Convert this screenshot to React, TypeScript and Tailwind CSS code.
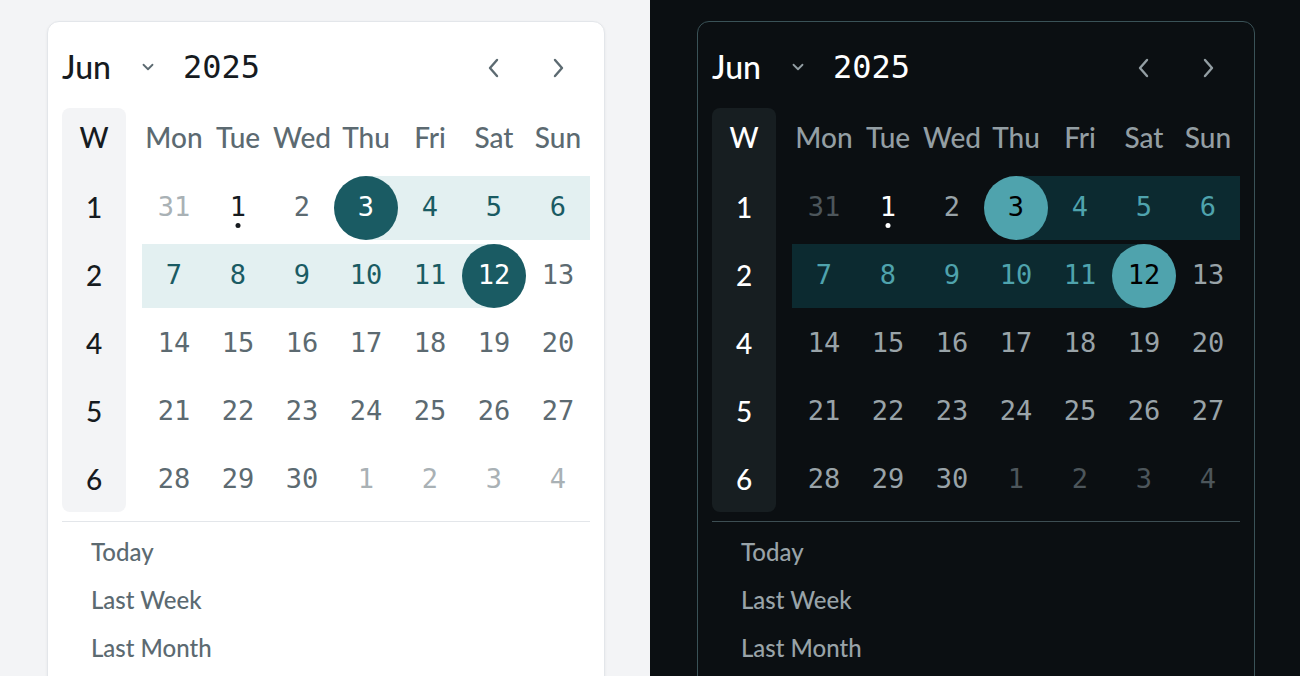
import React from 'react';

type Theme = 'light' | 'dark';

interface Day {
  n: number;
  outside?: boolean;
  today?: boolean;
}

const WEEKDAYS = ['Mon', 'Tue', 'Wed', 'Thu', 'Fri', 'Sat', 'Sun'];
const WEEK_NUMBERS = [1, 2, 4, 5, 6];

const ROWS: Day[][] = [
  [{ n: 31, outside: true }, { n: 1, today: true }, { n: 2 }, { n: 3 }, { n: 4 }, { n: 5 }, { n: 6 }],
  [{ n: 7 }, { n: 8 }, { n: 9 }, { n: 10 }, { n: 11 }, { n: 12 }, { n: 13 }],
  [{ n: 14 }, { n: 15 }, { n: 16 }, { n: 17 }, { n: 18 }, { n: 19 }, { n: 20 }],
  [{ n: 21 }, { n: 22 }, { n: 23 }, { n: 24 }, { n: 25 }, { n: 26 }, { n: 27 }],
  [{ n: 28 }, { n: 29 }, { n: 30 }, { n: 1, outside: true }, { n: 2, outside: true }, { n: 3, outside: true }, { n: 4, outside: true }],
];

const RANGE_START = 3;
const RANGE_END = 12;

const PRESETS = ['Today', 'Last Week', 'Last Month'];

const sans = "font-['Lato','Noto_Sans',sans-serif]";
const mono = "font-['DejaVu_Sans_Mono','Liberation_Mono',monospace]";

const styles = {
  light: {
    page: 'bg-[#f3f4f6]',
    card: 'bg-white border-[#e3e6ea] shadow-[0_1px_3px_rgba(0,0,0,0.06)]',
    title: 'text-[#161b1f]',
    chevron: 'text-[#5c6a71]',
    weekCol: 'bg-[#f3f4f6]',
    weekText: 'text-[#161b1f]',
    label: 'text-[#5c6a71]',
    day: 'text-[#5c6a71]',
    outside: 'text-[#a9b1b5]',
    today: 'text-[#161b1f]',
    todayDot: 'bg-[#161b1f]',
    rangeText: 'text-[#1a5b63]',
    band: 'bg-[#e3f0f1]',
    bandStart: 'bg-[linear-gradient(to_right,transparent_50%,#e3f0f1_50%)]',
    bandEnd: 'bg-[linear-gradient(to_right,#e3f0f1_50%,transparent_50%)]',
    circle: 'bg-[#1a5b63] text-white',
    divider: 'border-[#e3e6ea]',
    preset: 'text-[#5c6a71]',
  },
  dark: {
    page: 'bg-[#0b0f12]',
    card: 'bg-[#0b0f12] border-[#3a5257]',
    title: 'text-white',
    chevron: 'text-[#939ea3]',
    weekCol: 'bg-[#171e21]',
    weekText: 'text-white',
    label: 'text-[#939ea3]',
    day: 'text-[#99a3a8]',
    outside: 'text-[#4d565b]',
    today: 'text-white',
    todayDot: 'bg-white',
    rangeText: 'text-[#4fa3ad]',
    band: 'bg-[#0c2a30]',
    bandStart: 'bg-[linear-gradient(to_right,transparent_50%,#0c2a30_50%)]',
    bandEnd: 'bg-[linear-gradient(to_right,#0c2a30_50%,transparent_50%)]',
    circle: 'bg-[#4fa3ad] text-black',
    divider: 'border-[#3d4e53]',
    preset: 'text-[#99a3a8]',
  },
};

const Arrow: React.FC<{ dir: 'left' | 'right' | 'down'; className?: string; size?: number }> = ({ dir, className, size = 24 }) => {
  const d =
    dir === 'left' ? 'M15 4 L8 12 L15 20' : dir === 'right' ? 'M9 4 L16 12 L9 20' : 'M6 9 L12 15 L18 9';
  return (
    <svg width={size} height={size} viewBox="0 0 24 24" fill="none" className={className}>
      <path d={d} stroke="currentColor" strokeWidth={2.4} strokeLinecap="round" strokeLinejoin="round" />
    </svg>
  );
};

const DayCell: React.FC<{ day: Day; theme: Theme }> = ({ day, theme }) => {
  const s = styles[theme];
  const inMonth = !day.outside;
  const isStart = inMonth && day.n === RANGE_START;
  const isEnd = inMonth && day.n === RANGE_END;
  const inRange = inMonth && day.n > RANGE_START && day.n < RANGE_END;

  let bg = '';
  if (isStart) bg = s.bandStart;
  else if (isEnd) bg = s.bandEnd;
  else if (inRange) bg = s.band;

  let color = s.day;
  if (day.outside) color = s.outside;
  else if (inRange) color = s.rangeText;
  else if (day.today) color = s.today;

  return (
    <div className={`relative h-16 flex items-center justify-center ${bg}`}>
      {isStart || isEnd ? (
        <div className={`w-16 h-16 rounded-full flex items-center justify-center pb-[3px] ${s.circle}`}>
          <span className={`${mono} text-[27px] leading-none`}>{day.n}</span>
        </div>
      ) : (
        <span className={`${mono} text-[27px] leading-none pb-[3px] ${color}`}>{day.n}</span>
      )}
      {day.today && (
        <span className={`absolute bottom-[12px] left-1/2 -translate-x-1/2 w-[5px] h-[5px] rounded-full ${s.todayDot}`} />
      )}
    </div>
  );
};

const Calendar: React.FC<{ theme: Theme }> = ({ theme }) => {
  const s = styles[theme];
  return (
    <div className={`w-[650px] h-[676px] overflow-hidden ${s.page}`}>
      <div className={`ml-[47px] mt-[21px] w-[558px] h-[700px] rounded-[12px] border px-[14px] pt-[22px] ${s.card}`}>
        {/* header */}
        <div className="h-12 flex items-center justify-between">
          <div className="flex items-center pb-[2px]">
            <span className={`${sans} text-[32px] font-medium leading-none ${s.title}`}>Jun</span>
            <Arrow dir="down" size={18} className={`ml-[28px] ${s.chevron}`} />
            <span className={`${mono} text-[32px] leading-none ml-[26px] ${s.title}`}>2025</span>
          </div>
          <div className="flex">
            <button className={`w-16 h-12 flex items-center justify-center ${s.chevron}`}>
              <Arrow dir="left" />
            </button>
            <button className={`w-16 h-12 flex items-center justify-center ${s.chevron}`}>
              <Arrow dir="right" />
            </button>
          </div>
        </div>

        {/* grid */}
        <div className="mt-4 flex gap-4">
          <div className={`w-16 rounded-lg flex flex-col gap-1 ${s.weekCol}`}>
            <div className={`h-16 flex items-center justify-center pb-[6px] ${sans} text-[28px] font-medium leading-none ${s.weekText}`}>W</div>
            {WEEK_NUMBERS.map(w => (
              <div key={w} className={`h-16 flex items-center justify-center pb-[2px] ${sans} text-[28px] font-medium leading-none ${s.weekText}`}>
                {w}
              </div>
            ))}
          </div>
          <div className="flex flex-col gap-1">
            <div className="grid grid-cols-7 w-[448px]">
              {WEEKDAYS.map(d => (
                <div key={d} className={`h-16 flex items-center justify-center pb-[6px] ${sans} text-[28px] font-medium leading-none ${s.label}`}>
                  {d}
                </div>
              ))}
            </div>
            {ROWS.map((row, i) => (
              <div key={i} className="grid grid-cols-7 w-[448px]">
                {row.map((day, j) => (
                  <DayCell key={j} day={day} theme={theme} />
                ))}
              </div>
            ))}
          </div>
        </div>

        {/* presets */}
        <div className={`mt-[9px] border-t pt-[6px] ${s.divider}`}>
          {PRESETS.map(p => (
            <div key={p} className={`h-12 flex items-center pl-[29px] ${sans} text-[24px] font-medium ${s.preset}`}>
              {p}
            </div>
          ))}
        </div>
      </div>
    </div>
  );
};

const App: React.FC = () => {
  return (
    <div className="flex w-[1300px] h-[676px] overflow-hidden">
      <Calendar theme="light" />
      <Calendar theme="dark" />
    </div>
  );
};

export default App;
